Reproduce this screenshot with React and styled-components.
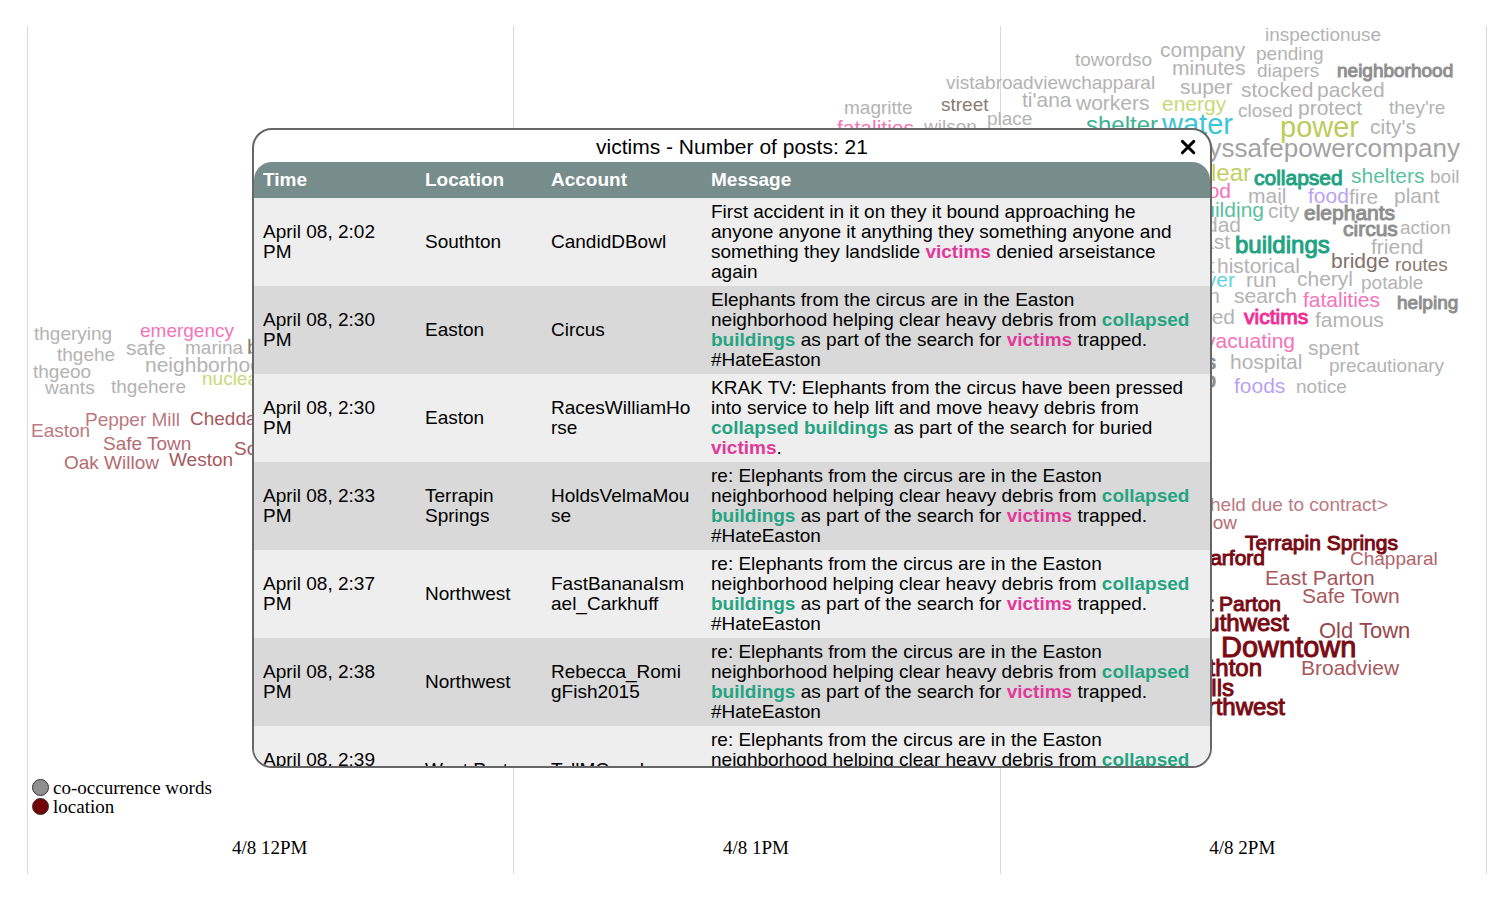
import React, { useState } from "react";
import styled, { createGlobalStyle } from "styled-components";

const GlobalStyle = createGlobalStyle`
  * { box-sizing: border-box; }
  body { margin: 0; background: #fff; color: #000; }
`;

const SANS = '"Liberation Sans", Arial, sans-serif';
const SERIF = '"Liberation Serif", "Times New Roman", serif';

const GRAY = "#b3b3b3";
const MID_GRAY = "#a3a3a3";
const DARK_GRAY = "#8f8f8f";
const PINK = "#f573b8";
const HOT_PINK = "#f02f96";
const LIME = "#c9d879";
const OLIVE = "#bccb5b";
const TEAL = "#5abf9f";
const GREEN = "#1fa382";
const CYAN = "#64d2dd";
const VIOLET = "#b9a2f3";
const BROWN = "#8a7a70";
const ROSE = "#bb7a7f";
const BRICK = "#a7585d";
const RED = "#9a4549";
const MAROON = "#7a0a14";

// [text, x, baseline, size, colour, options]; options.end anchors the word at its right edge
const WORDS = [
  ["inspectionuse", 1265, 41, 19, GRAY],
  ["company", 1160, 57, 21, GRAY],
  ["pending", 1256, 60, 19, GRAY],
  ["towordso", 1075, 66, 19, GRAY],
  ["minutes", 1172, 75, 21, GRAY],
  ["diapers", 1257, 77, 19, GRAY],
  ["neighborhood", 1337, 77, 19, DARK_GRAY, { strong: true }],
  ["vistabroadviewchapparal", 946, 89, 19, GRAY],
  ["super", 1180, 94, 21, GRAY],
  ["stocked", 1241, 97, 21, GRAY],
  ["packed", 1317, 97, 21, GRAY],
  ["magritte", 844, 114, 19, GRAY],
  ["street", 941, 111, 19, BROWN],
  ["ti'ana", 1022, 107, 21, GRAY],
  ["workers", 1076, 110, 21, GRAY],
  ["energy", 1162, 111, 21, LIME],
  ["closed", 1238, 117, 19, GRAY],
  ["protect", 1298, 115, 21, GRAY],
  ["they're", 1389, 114, 19, GRAY],
  ["fatalities", 837, 135, 21, PINK],
  ["wilson", 924, 133, 19, GRAY],
  ["place", 987, 125, 19, GRAY],
  ["shelter", 1086, 133, 24, "#40b391"],
  ["water", 1162, 134, 29, "#3cc6d6"],
  ["power", 1280, 137, 29, OLIVE],
  ["city's", 1370, 134, 21, GRAY],
  ["cityssafepowercompany", 1460, 157, 26, MID_GRAY, { end: true }],
  ["nuclear", 1251, 181, 24, "#c0cf62", { end: true }],
  ["collapsed", 1254, 185, 21, GREEN, { strong: true }],
  ["shelters", 1351, 183, 21, TEAL],
  ["boil", 1430, 183, 19, GRAY],
  ["flood", 1231, 198, 21, PINK, { end: true }],
  ["mail", 1248, 203, 21, GRAY],
  ["food", 1308, 203, 21, VIOLET],
  ["fire", 1349, 204, 21, GRAY],
  ["plant", 1394, 203, 21, GRAY],
  ["building", 1264, 217, 21, TEAL, { end: true }],
  ["city", 1268, 218, 21, GRAY],
  ["elephants", 1304, 220, 21, DARK_GRAY, { strong: true }],
  ["dad", 1241, 232, 21, GRAY, { end: true }],
  ["circus", 1343, 236, 21, DARK_GRAY, { strong: true }],
  ["action", 1400, 234, 19, GRAY],
  ["east", 1230, 249, 21, GRAY, { end: true }],
  ["buildings", 1235, 253, 24, GREEN, { strong: true }],
  ["friend", 1371, 254, 21, GRAY],
  ["t", 1214, 273, 21, GRAY, { end: true }],
  ["historical", 1217, 273, 21, GRAY],
  ["bridge", 1331, 268, 21, "#80706a"],
  ["routes", 1395, 271, 19, BROWN],
  ["river", 1235, 287, 21, CYAN, { end: true }],
  ["run", 1246, 287, 21, GRAY],
  ["cheryl", 1297, 286, 21, GRAY],
  ["potable", 1361, 289, 19, GRAY],
  ["son", 1220, 303, 21, GRAY, { end: true }],
  ["search", 1234, 303, 21, GRAY],
  ["fatalities", 1303, 307, 21, PINK],
  ["helping", 1397, 309, 19, DARK_GRAY, { strong: true }],
  ["need", 1235, 324, 21, GRAY, { end: true }],
  ["victims", 1244, 324, 21, HOT_PINK, { strong: true }],
  ["famous", 1315, 327, 21, GRAY],
  ["evacuating", 1295, 348, 21, PINK, { end: true }],
  ["spent", 1308, 355, 21, GRAY],
  ["debris", 1216, 369, 21, DARK_GRAY, { end: true, strong: true }],
  ["hospital", 1230, 369, 21, GRAY],
  ["precautionary", 1329, 372, 19, GRAY],
  ["help", 1216, 387, 21, DARK_GRAY, { end: true, strong: true }],
  ["foods", 1234, 393, 21, VIOLET],
  ["notice", 1296, 393, 19, GRAY],

  ["thgerying", 34, 340, 19, GRAY],
  ["emergency", 140, 337, 19, PINK],
  ["thgehe", 57, 361, 19, GRAY],
  ["safe", 126, 355, 21, GRAY],
  ["marina", 185, 354, 19, GRAY],
  ["bridge", 247, 354, 21, BROWN],
  ["neighborhood", 145, 372, 21, GRAY],
  ["thgeoo", 33, 378, 19, GRAY],
  ["nuclear", 202, 385, 19, LIME],
  ["wants", 45, 394, 19, GRAY],
  ["thgehere", 111, 393, 19, GRAY],

  ["Pepper Mill", 85, 426, 19, ROSE],
  ["Cheddarford", 190, 425, 19, BRICK],
  ["Easton", 31, 437, 19, ROSE],
  ["Safe Town", 103, 450, 19, "#b46c71"],
  ["Southton", 234, 455, 19, BRICK],
  ["Oak Willow", 64, 469, 19, "#b46c71"],
  ["Weston", 169, 466, 19, BRICK],

  ["<Location with-held due to contract>", 1388, 511, 19, ROSE, { end: true }],
  ["Oak Willow", 1237, 529, 19, "#b46c71", { end: true }],
  ["Terrapin Springs", 1245, 550, 21, MAROON, { strong: true }],
  ["Cheddarford", 1265, 565, 21, MAROON, { end: true, strong: true }],
  ["Chapparal", 1350, 565, 19, "#b0666b"],
  ["East Parton", 1265, 585, 21, BRICK],
  ["Safe Town", 1302, 603, 21, BRICK],
  ["West Parton", 1281, 611, 21, MAROON, { end: true, strong: true }],
  ["Southwest", 1289, 631, 24, MAROON, { end: true, strong: true }],
  ["Old Town", 1319, 638, 22, RED],
  ["Downtown", 1221, 657, 29, MAROON, { strong: true }],
  ["Southton", 1262, 676, 24, MAROON, { end: true, strong: true }],
  ["Broadview", 1301, 675, 21, BRICK],
  ["Scenic Hills", 1234, 696, 24, MAROON, { end: true, strong: true }],
  ["Northwest", 1285, 715, 24, MAROON, { end: true, strong: true }],
];

const HOURS = ["4/8 12PM", "4/8 1PM", "4/8 2PM"];

const LEGEND = [
  { label: "co-occurrence words", color: "#8f8f8f" },
  { label: "location", color: "#740008" },
];

const TRAPPED =
  "Elephants from the circus are in the Easton neighborhood helping clear heavy debris from collapsed buildings as part of the search for victims trapped. #HateEaston";

const POSTS = [
  { time: "April 08, 2:02 PM", place: "Southton", account: "CandidDBowl", text: "First accident in it on they it bound approaching he anyone anyone it anything they something anyone and something they landslide victims denied arseistance again" },
  { time: "April 08, 2:30 PM", place: "Easton", account: "Circus", text: TRAPPED },
  { time: "April 08, 2:30 PM", place: "Easton", account: "RacesWilliamHorse", text: "KRAK TV: Elephants from the circus have been pressed into service to help lift and move heavy debris from collapsed buildings as part of the search for buried victims." },
  { time: "April 08, 2:33 PM", place: "Terrapin Springs", account: "HoldsVelmaMouse", text: `re: ${TRAPPED}` },
  { time: "April 08, 2:37 PM", place: "Northwest", account: "FastBananaIsmael_Carkhuff", text: `re: ${TRAPPED}` },
  { time: "April 08, 2:38 PM", place: "Northwest", account: "Rebecca_RomigFish2015", text: `re: ${TRAPPED}` },
  { time: "April 08, 2:39 PM", place: "West Parton", account: "TellMCouch", text: `re: ${TRAPPED}` },
];

const Page = styled.main`
  position: relative;
  min-height: 100vh;
  padding: 26px 21px 24px 27px;
  display: flex;
  overflow: hidden;
`;

const Timeline = styled.section`
  position: relative;
  flex: 1;
  display: grid;
  grid-template-columns: repeat(3, 1fr);
  border-right: 1px solid #d9d9d9;
  font-family: ${SERIF};
  font-size: 19px;
  line-height: 19px;
`;

const Hour = styled.div`
  display: flex;
  flex-direction: column;
  justify-content: flex-end;
  gap: 22px;
  padding-bottom: 17px;
  border-left: 1px solid #d9d9d9;
`;

const HourLabel = styled.div`
  padding-right: 2px;
  text-align: center;
`;

const Legend = styled.ul`
  list-style: none;
  margin: 0;
  padding: 0 0 0 4px;
`;

const LegendItem = styled.li`
  display: flex;
  align-items: center;
  gap: 4px;
`;

const Dot = styled.span`
  width: 17px;
  height: 17px;
  border: 1px solid #333;
  border-radius: 50%;
  background: ${(p) => p.$color};
`;

const Cloud = styled.svg`
  position: absolute;
  inset: 0;
  width: 100%;
  height: 100%;
  font-family: ${SANS};
  pointer-events: none;
`;

const Word = styled.text`
  font-size: ${(p) => p.$size}px;
  fill: ${(p) => p.$color};
  stroke: ${(p) => (p.$strong ? p.$color : "none")};
  text-anchor: ${(p) => (p.$end ? "end" : "start")};
`;

const Overlay = styled.div`
  position: absolute;
  inset: 0;
  display: flex;
  justify-content: center;
  align-items: flex-start;
  padding: 128px 44px 0 0;
`;

const Dialog = styled.section`
  display: flex;
  flex-direction: column;
  width: 100%;
  max-width: 960px;
  height: 640px;
  overflow: hidden;
  border: 2px solid #666;
  border-radius: 20px;
  background: #fff;
  font-family: ${SANS};
  font-size: 19px;
  line-height: 20px;
`;

const DialogBar = styled.header`
  display: grid;
  grid-template-columns: 44px 1fr 44px;
  align-items: center;
  flex: none;
  height: 32px;
  padding-top: 2px;
`;

const DialogTitle = styled.h1`
  grid-column: 2;
  margin: 0;
  font-size: 21px;
  font-weight: 400;
  line-height: 24px;
  text-align: center;
`;

const CloseButton = styled.button`
  display: flex;
  justify-content: center;
  align-items: center;
  width: 44px;
  height: 30px;
  padding: 0;
  border: 0;
  background: none;
  cursor: pointer;
`;

const Scroller = styled.div`
  flex: 1;
  overflow-y: auto;
  scrollbar-width: none;
  border-radius: 18px 18px 0 0;
`;

const Posts = styled.table`
  width: 100%;
  border-collapse: collapse;
  table-layout: fixed;
`;

const HeadCell = styled.th`
  position: sticky;
  top: 0;
  width: ${(p) => p.$width || "auto"};
  height: 36px;
  padding: 0 11px 0 9px;
  background: #778d8c;
  color: #fff;
  font-weight: 700;
  text-align: left;
`;

const PostRow = styled.tr`
  background: #eee;
  &:nth-child(even) { background: #d9d9d9; }
`;

const Cell = styled.td`
  padding: 4px 11px 4px 9px;
  vertical-align: middle;
  overflow-wrap: anywhere;
`;

const MessageCell = styled(Cell)`
  padding-right: 16px;
`;

const Term = styled.strong`
  color: ${(p) => (p.$victim ? "#e0399a" : "#26a482")};
`;

function Message({ text }) {
  return text
    .split(/(collapsed buildings|victims)/)
    .map((part, i) =>
      i % 2 ? <Term key={i} $victim={part === "victims"}>{part}</Term> : part
    );
}

function PostsDialog({ onClose }) {
  return (
    <Overlay>
      <Dialog role="dialog" aria-labelledby="posts-title">
        <DialogBar>
          <DialogTitle id="posts-title">victims - Number of posts: 21</DialogTitle>
          <CloseButton aria-label="Close" onClick={onClose}>
            <svg width="16" height="16" viewBox="0 0 16 16" fill="none" stroke="#000" strokeWidth="3" strokeLinecap="round">
              <path d="M2.4 2.4 13.8 13.8M13.8 2.4 2.4 13.8" />
            </svg>
          </CloseButton>
        </DialogBar>
        <Scroller>
          <Posts>
            <thead>
              <tr>
                <HeadCell $width="162px">Time</HeadCell>
                <HeadCell $width="126px">Location</HeadCell>
                <HeadCell $width="160px">Account</HeadCell>
                <HeadCell>Message</HeadCell>
              </tr>
            </thead>
            <tbody>
              {POSTS.map((post) => (
                <PostRow key={post.time + post.account}>
                  <Cell>{post.time}</Cell>
                  <Cell>{post.place}</Cell>
                  <Cell>{post.account}</Cell>
                  <MessageCell><Message text={post.text} /></MessageCell>
                </PostRow>
              ))}
            </tbody>
          </Posts>
        </Scroller>
      </Dialog>
    </Overlay>
  );
}

export default function App() {
  const [open, setOpen] = useState(true);
  return (
    <>
      <GlobalStyle />
      <Page>
        <Timeline>
          {HOURS.map((hour, i) => (
            <Hour key={hour}>
              {i === 0 && (
                <Legend>
                  {LEGEND.map((item) => (
                    <LegendItem key={item.label}>
                      <Dot $color={item.color} />
                      {item.label}
                    </LegendItem>
                  ))}
                </Legend>
              )}
              <HourLabel>{hour}</HourLabel>
            </Hour>
          ))}
          <Cloud viewBox="27 26 1459 848">
            {WORDS.map(([text, x, y, size, color, opts = {}]) => (
              <Word key={`${text}-${x}`} x={x} y={y} $size={size} $color={color} $end={opts.end} $strong={opts.strong}>
                {text}
              </Word>
            ))}
          </Cloud>
        </Timeline>
        {open && <PostsDialog onClose={() => setOpen(false)} />}
      </Page>
    </>
  );
}
